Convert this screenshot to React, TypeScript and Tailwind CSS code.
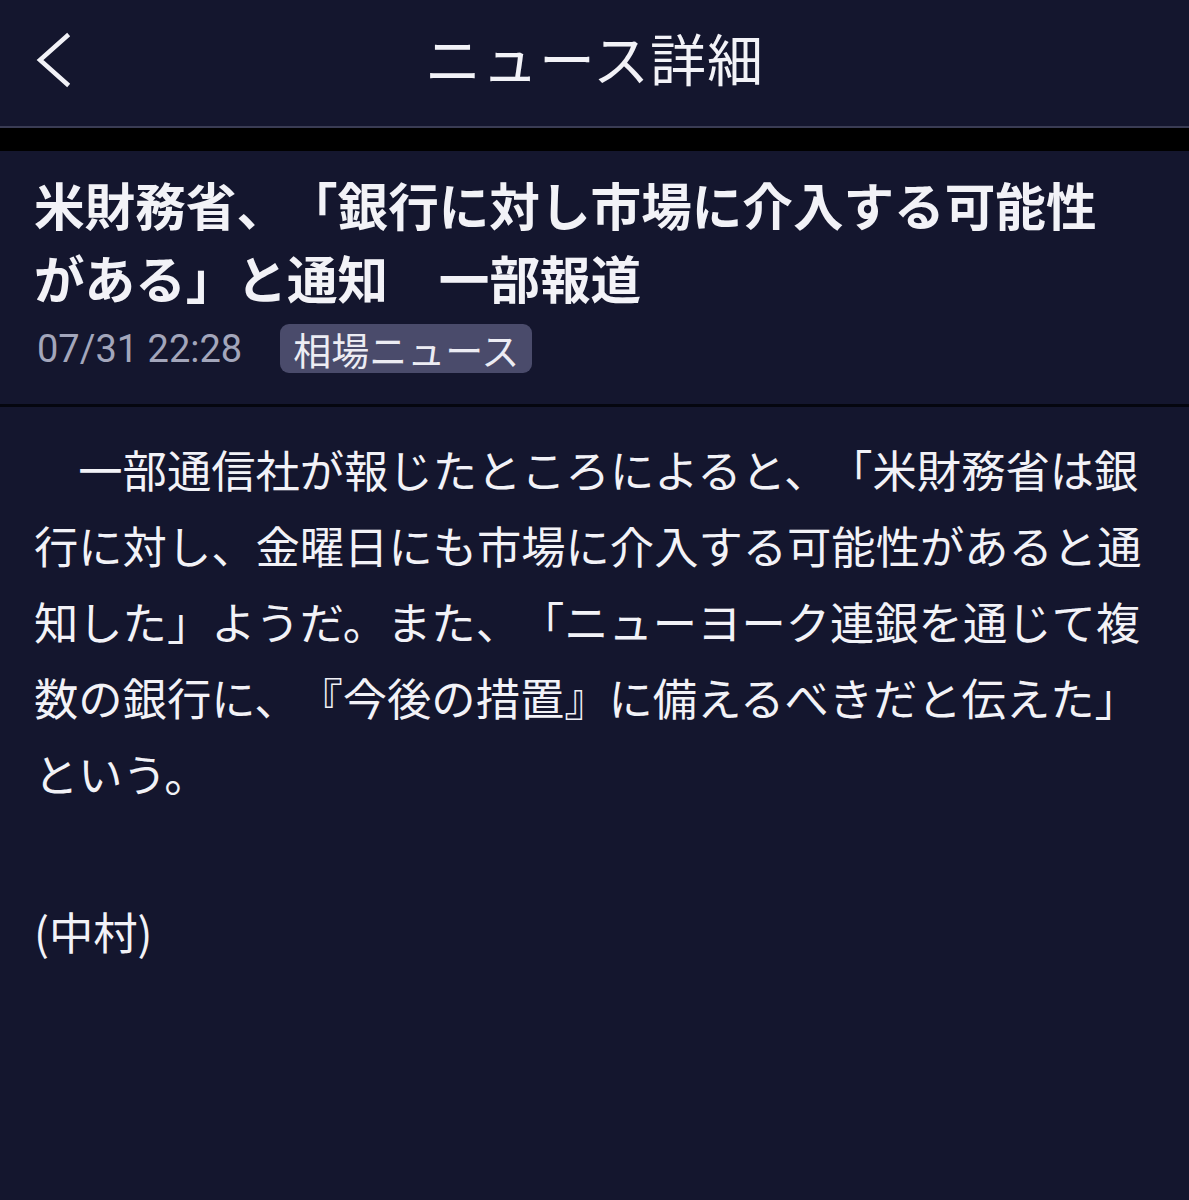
export default function App() {
  const jp = { fontFamily: '"Noto Sans CJK JP", "Noto Sans", sans-serif' }

  return (
    <div className="min-h-[1200px] bg-[#14162e] text-[#f2f2f7] [text-spacing-trim:space-all]" style={jp}>
      {/* Top bar */}
      <header className="relative h-[126px] flex items-center justify-center">
        <button className="absolute left-[34px] top-[32px] w-[40px] h-[56px] flex items-center justify-center">
          <svg width="40" height="56" viewBox="0 0 40 56" fill="none">
            <path d="M33 4 L6 28 L33 52" stroke="#f2f2f7" strokeWidth="4.5" strokeLinecap="square" />
          </svg>
        </button>
        <h1 className="text-[56px] font-normal leading-none tracking-[1px] mt-[-12px]">ニュース詳細</h1>
      </header>
      <div className="h-[2px] bg-[#3a3c54]" />
      <div className="h-[23px] bg-black" />

      {/* Title + meta */}
      <section className="px-[34px] pt-[17px] pb-[31px]">
        <h2 className="text-[50.6px] font-bold leading-[73px]">
          米財務省、「銀行に対し市場に介入する可能性
          <br />
          がある」と通知{'\u3000'}一部報道
        </h2>
        <div className="flex items-center gap-[38px] mt-[10px] pl-[3px]">
          <span
            className="text-[38px] text-[#a3a6bb] leading-none"
            style={{ fontFamily: 'Roboto, "Noto Sans", sans-serif' }}
          >
            07/31 22:28
          </span>
          <span className="bg-[#4a4b6b] rounded-[9px] px-[13px] h-[49px] flex items-center text-[38px] leading-none text-[#ececf3]">
            相場ニュース
          </span>
        </div>
      </section>
      <div className="h-[3px] bg-[#05060f]" />

      {/* Body */}
      <article className="px-[34px] pt-[24px] text-[44.3px] leading-[76px]">
        <p>
          {'\u3000'}一部通信社が報じたところによると、「米財務省は銀
          <br />
          行に対し、金曜日にも市場に介入する可能性があると通
          <br />
          知した」ようだ。また、「ニューヨーク連銀を通じて複
          <br />
          数の銀行に、『今後の措置』に備えるべきだと伝えた」
          <br />
          という。
        </p>
        <p className="mt-[82px]">(中村)</p>
      </article>
    </div>
  )
}
